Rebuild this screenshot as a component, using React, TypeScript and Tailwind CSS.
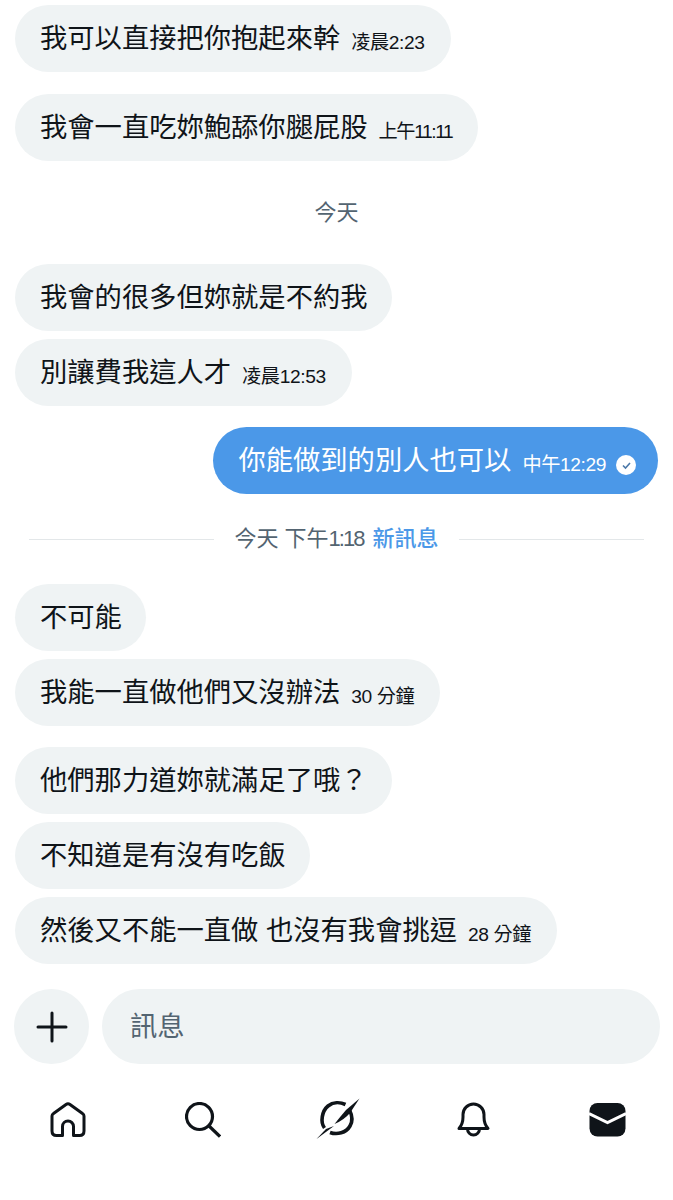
import { Plus } from 'lucide-react';

const fontStack = "font-['Liberation_Sans','Noto_Sans_CJK_TC',sans-serif]";

function Bubble({ text, time, timeClass = '', className = '' }: { text: string; time?: string; timeClass?: string; className?: string }) {
  return (
    <div className={`flex h-[67px] w-fit items-center rounded-full bg-[#eff3f4] pl-[25px] text-[#0f1419] ${time ? 'pr-[26px]' : 'pr-[24px]'} ${className}`}>
      <span className="mt-[1px] text-[27.3px] leading-none">{text}</span>
      {time && <span className={`ml-[11px] mt-[9px] text-[19.2px] leading-none ${timeClass || 'tracking-[-0.4px]'}`}>{time}</span>}
    </div>
  );
}

function HomeIcon() {
  return (
    <svg width="36" height="36" viewBox="0 0 36 36" fill="none" stroke="#0f1419" strokeWidth="3" strokeLinejoin="round">
      <path d="M2 14Q2 12.500 3.500 11.500L16 2.500Q18 1 20 2.500L32.500 11.500Q34 12.500 34 14V29Q34 33.500 29.500 33.500H23.500V24.500a5.500 5.500 0 0 0-11 0V33.500H6.500Q2 33.500 2 29Z" />
    </svg>
  );
}

function SearchIcon() {
  return (
    <svg width="36" height="36" viewBox="0 0 36 36" fill="none" stroke="#0f1419" strokeWidth="3.200">
      <circle cx="14.500" cy="14.500" r="13" />
      <path d="M23.500 23.500 35 34.500" />
    </svg>
  );
}

function SlashIcon() {
  return (
    <svg width="44" height="44" viewBox="0 0 44 44" fill="none">
      <path d="M8.500 30C4 24 6 13 12 8C17 4 24 4 29.500 6.500" stroke="#0f1419" strokeWidth="3.600" />
      <path d="M14 34.500C21 37 30 35 34 28C37 23 36 17 33.500 12" stroke="#0f1419" strokeWidth="3.600" />
      <path d="M43.500.5 34 15Q28 22 18.500 26Q24 19 30 12Z" fill="#0f1419" />
      <path d="M18 28 .5 41 10 31Z" fill="#0f1419" />
    </svg>
  );
}

function BellIcon() {
  return (
    <svg width="36" height="36" viewBox="0 0 36 36" fill="none" stroke="#0f1419" strokeWidth="3" strokeLinejoin="round">
      <path d="M4 26.500Q8 22 8 15V12.500A10.500 10.500 0 0 1 29 12.500V15Q29 22 33 26.500Z" />
      <path d="M12.500 27a6 6 0 0 0 12 0" />
    </svg>
  );
}

function MailIcon() {
  return (
    <svg width="37" height="36" viewBox="0 0 37 36" fill="none">
      <rect x="0.5" y="1" width="36" height="33.500" rx="8" fill="#0f1419" />
      <path d="M0 11.500 18.500 20.500 37 11.500" stroke="#ffffff" strokeWidth="3" />
    </svg>
  );
}

export default function App() {
  return (
    <div className={`h-[1200px] w-[673px] overflow-hidden bg-white ${fontStack}`}>
      {/* Messages */}
      <div className="pt-[5px] pl-[15px]">
        <Bubble text="我可以直接把你抱起來幹" time="凌晨2:23" />
        <Bubble text="我會一直吃妳鮑舔你腿屁股" time="上午11:11" timeClass="tracking-[-1.4px]" className="mt-[22px]" />
      </div>

      <div className="mt-[37px] text-center text-[22px] leading-[30px] text-[#536471]">今天</div>

      <div className="mt-[36px] pl-[15px]">
        <Bubble text="我會的很多但妳就是不約我" />
        <Bubble text="別讓費我這人才" time="凌晨12:53" className="mt-[8px]" />
      </div>

      {/* Sent message */}
      <div className="mt-[21px] flex justify-end pr-[15px]">
        <div className="flex h-[67px] items-center rounded-full bg-[#4b98e8] pl-[25px] pr-[22px] text-white">
          <span className="mt-[1px] text-[27.3px] leading-none">你能做到的別人也可以</span>
          <span className="ml-[11px] mt-[9px] text-[19.2px] leading-none tracking-[-0.4px]">中午12:29</span>
          <span className="ml-[10px] mt-[9px] flex h-[20px] w-[20px] items-center justify-center rounded-full bg-white">
            <svg width="11" height="11" viewBox="0 0 11 11" fill="none" stroke="#4b78a8" strokeWidth="1.600">
              <path d="m2 5.500 2.500 2.500L9 3" />
            </svg>
          </span>
        </div>
      </div>

      {/* New messages divider */}
      <div className="mt-[30px] flex h-[30px] items-center px-[29px]">
        <div className="h-px flex-1 bg-[#e3e7e9]" />
        <div className="mx-[20px] text-[22px] leading-[30px] text-[#536471]">
          今天 下午<span className="tracking-[-2px]">1:18</span> <span className="ml-[3px] font-medium text-[#4b98e8]">新訊息</span>
        </div>
        <div className="h-px flex-1 bg-[#e3e7e9]" />
      </div>

      <div className="mt-[30px] pl-[15px]">
        <Bubble text="不可能" />
        <Bubble text="我能一直做他們又沒辦法" time="30 分鐘" className="mt-[8px]" />
        <Bubble text="他們那力道妳就滿足了哦？" className="mt-[21px]" />
        <Bubble text="不知道是有沒有吃飯" className="mt-[8px]" />
        <Bubble text="然後又不能一直做 也沒有我會挑逗" time="28 分鐘" className="mt-[8px]" />
      </div>

      {/* Composer */}
      <div className="mt-[25px] flex gap-[13px] pl-[14px] pr-[13px]">
        <div className="flex h-[75px] w-[75px] shrink-0 items-center justify-center rounded-full bg-[#eff3f4]">
          <Plus size={48} strokeWidth={1.5} color="#0f1419" />
        </div>
        <div className="flex h-[75px] flex-1 items-center rounded-full bg-[#eff3f4] pl-[28px] pt-[1px] text-[27.3px] text-[#536471]">訊息</div>
      </div>

      {/* Bottom nav */}
      <nav className="mt-[34px] grid h-[44px] w-[675px] grid-cols-5 items-center justify-items-center">
        <HomeIcon />
        <SearchIcon />
        <SlashIcon />
        <BellIcon />
        <MailIcon />
      </nav>
    </div>
  );
}
